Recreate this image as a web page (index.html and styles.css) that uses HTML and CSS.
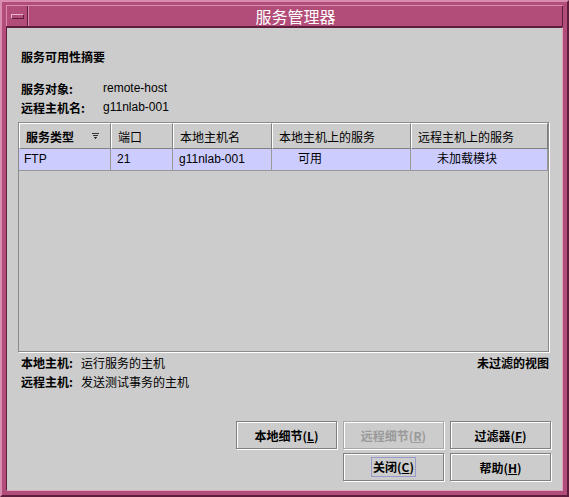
FILE: index.html
```html
<!DOCTYPE html>
<html lang="zh-CN">
<head>
<meta charset="utf-8">
<title>服务管理器</title>
<link rel="stylesheet" href="styles.css">
</head>
<body>
<div class="window">
  <div class="titlebar">
    <div class="menubtn"><span class="bar"></span></div>
    <div class="title">服务管理器</div>
  </div>
  <div class="content">
    <div class="heading">服务可用性摘要</div>
    <div class="info">
      <div class="inforow"><span class="lbl">服务对象:</span><span class="val">remote-host</span></div>
      <div class="inforow"><span class="lbl">远程主机名:</span><span class="val">g11nlab-001</span></div>
    </div>
    <div class="table">
      <div class="thead">
        <div class="th c1 bold">服务类型<svg class="sort" width="7" height="6" viewBox="0 0 7 6"><path d="M0 0.5H7M1 2.5H6M2 4.5H5M3 5.5H4" stroke="#333" stroke-width="1"/></svg></div>
        <div class="th c2">端口</div>
        <div class="th c3">本地主机名</div>
        <div class="th c4">本地主机上的服务</div>
        <div class="th c5">远程主机上的服务</div>
      </div>
      <div class="trow">
        <div class="td c1">FTP</div>
        <div class="td c2">21</div>
        <div class="td c3">g11nlab-001</div>
        <div class="td c4 ind">可用</div>
        <div class="td c5 ind">未加载模块</div>
      </div>
    </div>
    <div class="legend">
      <div class="legrow"><span class="lbl2">本地主机:</span><span class="val2">运行服务的主机</span><span class="right">未过滤的视图</span></div>
      <div class="legrow"><span class="lbl2">远程主机:</span><span class="val2">发送测试事务的主机</span></div>
    </div>
    <div class="buttons">
      <button class="btn b1">本地细节(<u>L</u>)</button>
      <button class="btn b2 disabled">远程细节(<u>R</u>)</button>
      <button class="btn b3">过滤器(<u>F</u>)</button>
      <button class="btn b5"><span class="focus">关闭(<u>C</u>)</span></button>
      <button class="btn b6">帮助(<u>H</u>)</button>
    </div>
  </div>
</div>
</body>
</html>
```
FILE: styles.css
```css
html, body {
  margin: 0;
  padding: 0;
  background: #b24c79;
}
body {
  font-family: "Liberation Sans", "Noto Sans CJK SC", sans-serif;
  font-size: 12px;
  color: #000;
}
.window {
  width: 569px;
  height: 497px;
  box-sizing: border-box;
  background: #b24c79;
  border-top: 2px solid #d98cb0;
  border-left: 2px solid #d98cb0;
  border-right: 2px solid #5e1d3d;
  border-bottom: 2px solid #5e1d3d;
  padding: 3px 4px 4px 4px;
  display: flex;
  flex-direction: column;
}
.titlebar {
  display: flex;
  border-top: 1px solid #d98cb0;
  border-bottom: 1px solid #5e1d3d;
  box-sizing: border-box;
  height: 22px;
}
.menubtn {
  width: 20px;
  border-left: 1px solid #d98cb0;
  border-right: 1px solid #5e1d3d;
  display: flex;
  align-items: center;
  justify-content: center;
}
.menubtn .bar {
  width: 11px;
  height: 3px;
  background: #b24c79;
  border-top: 1px solid #e8b5cc;
  border-left: 1px solid #e8b5cc;
  border-bottom: 1px solid #5e1d3d;
  border-right: 1px solid #5e1d3d;
}
.title {
  flex: 1;
  text-align: center;
  color: #fff;
  font-family: "Noto Sans CJK SC", sans-serif;
  font-size: 16px;
  line-height: 20px;
  border-left: 1px solid #d98cb0;
  border-right: 1px solid #5e1d3d;
}
.content {
  flex: 1;
  background: #cccccc;
  border-left: 1px solid #5e1d3d;
  border-top: 1px solid #5e1d3d;
  border-right: 1px solid #e0a3bf;
  border-bottom: 1px solid #e0a3bf;
  padding: 0 12px 0 11px;
  display: flex;
  flex-direction: column;
}
.heading {
  font-family: "Noto Sans CJK SC", sans-serif;
  font-weight: bold;
  font-size: 12px;
  line-height: 16px;
  margin-top: 21px;
  padding-left: 3px;
}
.info {
  margin-top: 14px;
  padding-left: 3px;
}
.inforow {
  display: flex;
  height: 19px;
  line-height: 19px;
}
.lbl {
  font-family: "Noto Sans CJK SC", sans-serif;
  font-weight: bold;
  width: 82px;
}
.val {
  font-family: "Liberation Sans", sans-serif;
}
.table {
  margin-top: 5px;
  width: 531px;
  height: 230px;
  box-sizing: border-box;
  border: 1px solid #8a8a8a;
  box-shadow: 1px 1px 0 #fff;
  background: #cccccc;
}
.thead, .trow {
  display: flex;
}
.th {
  height: 26px;
  box-sizing: border-box;
  border-top: 1px solid #fff;
  border-left: 1px solid #fff;
  border-right: 1px solid #808080;
  border-bottom: 1px solid #808080;
  font-family: "Noto Sans CJK SC", sans-serif;
  line-height: 23px;
  padding-left: 6px;
  display: flex;
  align-items: center;
}
.th.bold { font-weight: bold; }
.sort { margin-left: 18px; }
.c1 { width: 92px; }
.c2 { width: 62px; }
.c3 { width: 99px; }
.c4 { width: 139px; }
.c5 { width: 137px; }
.td {
  height: 22px;
  box-sizing: border-box;
  background: #ccccff;
  border-right: 1px solid #999;
  border-bottom: 1px solid #999;
  line-height: 21px;
  padding-left: 6px;
  font-family: "Liberation Sans", "Noto Sans CJK SC", sans-serif;
}
.td.c1 { padding-left: 5px; }
.td.ind { padding-left: 26px; }
.legend {
  margin-top: 1px;
  padding-left: 3px;
  width: 528px;
}
.legrow {
  display: flex;
  height: 19px;
  line-height: 19px;
  font-family: "Noto Sans CJK SC", sans-serif;
}
.lbl2 {
  font-weight: bold;
  width: 60px;
}
.val2 { flex: 1; }
.right { font-weight: bold; }
.buttons {
  margin-top: 30px;
  align-self: flex-end;
  margin-right: -1px;
  display: grid;
  grid-template-columns: 101px 101px 101px;
  grid-template-rows: 28px 28px;
  column-gap: 6px;
  row-gap: 4px;
}
.btn {
  margin: 0;
  padding: 0;
  background: #cccccc;
  border: 1px solid #808080;
  box-shadow: inset 1px 1px 0 #fff, 1px 1px 0 #fff;
  font-family: "Noto Sans CJK SC", sans-serif;
  font-weight: bold;
  font-size: 12px;
  color: #000;
  display: flex;
  align-items: center;
  justify-content: center;
}
.btn u { text-decoration: underline; }
.b5 { grid-column: 2; grid-row: 2; }
.b6 { grid-column: 3; grid-row: 2; }
.disabled {
  color: #9a9a9a;
  border-color: #a8a8a8;
}
.focus {
  border: 1px solid #9999cc;
  padding: 0 1px;
  line-height: 18px;
}
```
